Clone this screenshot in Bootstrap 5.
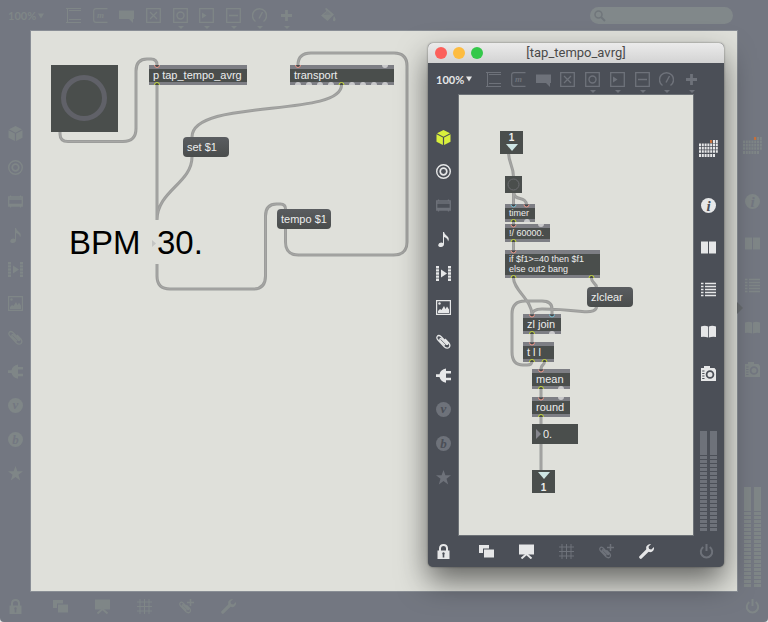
<!DOCTYPE html>
<html lang="en">
<head>
<meta charset="utf-8">
<meta name="viewport" content="width=device-width, initial-scale=1">
<title>tap_tempo</title>
<link href="https://cdn.jsdelivr.net/npm/bootstrap@5.3.0/dist/css/bootstrap.min.css" rel="stylesheet">
<style>
:root{--canvas:#dfe0da;--obj:#4a4e4c;--edge:#7d7e84}
body{font-family:"Liberation Sans",Arial,sans-serif;background:#e9e9e9}
.patcher{--bar:#737781;--ico:#7f8687;--on:#7f8687;--accent:#7f8687;background:var(--bar)}
.patcher.floating{--bar:#4b4f57;--ico:#6e727a;--on:#e6e7e8;--accent:#d9f03c}
.main-window{min-height:100vh;border-radius:0 0 4px 4px}
.floating{left:428px;top:43px;width:296px;height:524px;border-radius:5px;box-shadow:0 14px 30px rgba(0,0,0,.55),0 0 2px rgba(0,0,0,.5)}
.titlebar{height:20px;background:linear-gradient(#ebebeb,#d3d3d3);border-radius:5px 5px 0 0;font:13px/20px Roboto,sans-serif;color:#4a4a4a}
.lights{left:7px;top:4px;gap:6px}
.lights button{width:12px;height:12px;border-radius:50%}
.l-close{background:#fc605b}.l-min{background:#fdbc40}.l-zoom{background:#34c84a}
.toolbar,.statusbar{height:31px}
.floating .toolbar,.floating .statusbar{height:32px}
.ib{border:0;padding:0;background:none;color:var(--ico);width:15px;height:15px;display:block;flex:none;position:relative;line-height:0}
.ib svg{width:15px;height:15px;display:block;overflow:visible}
.ib.lit{color:var(--on)}
.ib.hot{color:var(--accent)}
.ib.menu::after{content:"";position:absolute;left:5px;top:18px;border:3px solid transparent;border-top-color:var(--ico);border-bottom:0}
.zoomer{padding-left:8px;width:66px;color:var(--on)}
.floating .zoomer{width:58px}
.zoomer select{appearance:none;border:0;background:none;padding:0;font:bold 11px/15px Lato,sans-serif;color:inherit;width:30px}
.zoomer svg{width:6px;height:6px}
.tools{width:228px}
.floating .tools{width:213px}
.fill-tool{margin-left:27px}
.finder{width:143px;height:17px;background:#81888a;border-radius:9px;margin-right:35px;padding-left:4px;color:#70767b}
.finder svg{width:12px;height:12px;flex:none}
.finder input{border:0;background:none;min-width:0;font-size:11px;line-height:15px;padding:0 4px;outline:0}
.side{width:31px;flex:none}
.side.left{padding-top:95px;gap:19px}
.floating .side.left{padding-top:35px}
.side.right{padding-top:106px}
.floating .side.right{padding-top:45px}
.calendar{width:19px;height:18px;margin-bottom:39px;color:var(--ico)}
.floating .calendar{margin-bottom:40px;color:var(--on)}
.calendar svg{width:19px;height:18px}
.stack{gap:27px}
.meters{gap:3px;margin-top:auto;margin-bottom:4px}
.meters div{width:7px;height:100px;background:linear-gradient(var(--ico),var(--ico)) 0 0/7px 23px no-repeat,repeating-linear-gradient(to top,var(--ico) 0 3px,transparent 3px 4px)}
.notch{left:0;top:271px;border:6px solid transparent;border-left-color:#666a6e;border-right:0}
.statusbar .first{width:31px}
.statusbar .group{margin-left:22px;gap:27px}
.floating .statusbar .group{margin-left:20px;gap:25px}
.power{width:31px}
.sheet{background:var(--canvas);box-shadow:0 0 0 1px rgba(190,195,195,.3)}
.floating .sheet{overflow:hidden}
.sheet>svg{left:0;top:0;overflow:visible;pointer-events:none}
.cords{fill:none;stroke:#9c9d9b;stroke-width:3}
.cords .core{stroke:#a7a7a5;stroke-width:1}
.obj,.msg,.box{position:absolute;color:#eceded;font-size:11px;line-height:13px;white-space:nowrap}
.obj{background:var(--obj);border:solid var(--edge);border-width:4px 0 3px;padding-left:4px;height:20px}
.obj.tiny{font-size:9px;line-height:11px;height:18px}
.msg{background:linear-gradient(#5a5d60,#4a4d4c);border:0;border-radius:4px;height:20px;padding:0 0 0 4px;line-height:20px;text-align:left}
.box{background:var(--obj);border:0;padding:0}
.box svg{display:block}
.big{position:absolute;color:#000;font-size:33px;line-height:38px}
#o-bang{left:20px;top:34px;width:67px;height:67px}
#o-tap{left:118px;top:34px;width:98px}
#o-transport{left:259px;top:34px;width:104px}
#m-set{left:152px;top:106px;width:46px}
#m-tempo{left:246px;top:178px;width:54px}
#t-bpm{left:38px;top:193px}
#t-num{left:126px;top:193px;width:60px;border:0;background:none;padding:0}
#i-in{left:41px;top:36px;width:23px;height:23px}
#i-bang{left:46px;top:81px;width:17px;height:17px}
#i-timer{left:46px;top:109px;width:30px}
#i-div{left:46px;top:129px;width:45px}
#i-if{left:46px;top:155px;width:95px;height:28px;line-height:10px}
#i-clear{left:128px;top:192px;width:46px}
#i-join{left:64px;top:219px;width:38px}
#i-tll{left:64px;top:247px;width:31px}
#i-mean{left:73px;top:274px;width:38px}
#i-round{left:73px;top:302px;width:38px}
#i-flo{left:73px;top:329px;width:46px;height:20px;line-height:20px;color:#eceded}
#i-flo input{border:0;background:none;color:inherit;width:34px;padding:0;font-size:11px;line-height:20px;height:20px;margin-left:2px}
#i-out{left:73px;top:375px;width:23px;height:23px}
.io{font-weight:bold;font-size:10px;line-height:10px;padding-top:2px}
</style>
<script src="https://cdn.jsdelivr.net/npm/bootstrap@5.3.0/dist/js/bootstrap.bundle.min.js"></script>
</head>
<body>
<svg class="position-absolute" width="0" height="0" aria-hidden="true">
<defs>
<symbol id="panel" viewBox="0 0 15 15"><path d="M0 .5h15M0 14.5h15M1.5 0v15M3 2.5h12M3 11.500h12" fill="none" stroke="currentColor"/></symbol>
<symbol id="mbox" viewBox="0 0 15 15"><path d="M14.500.7H3Q.7.700.7 3v9q0 2.300 2.300 2.300h11.500" fill="none" stroke="currentColor" stroke-width="1.200"/><text x="4" y="10" font-family="Liberation Serif,serif" font-size="9" font-style="italic" font-weight="bold" fill="currentColor">m</text></symbol>
<symbol id="comment" viewBox="0 0 15 15"><path d="M0 2.500h15v8.500h-1v4l-4-4H0z" fill="currentColor"/></symbol>
<symbol id="toggle" viewBox="0 0 15 15"><path d="M.7.700h13.600v13.600H.7zM4 4l7 7M11 4l-7 7" fill="none" stroke="currentColor" stroke-width="1.300"/></symbol>
<symbol id="btn-o" viewBox="0 0 15 15"><path d="M.7.700h13.600v13.600H.7z" fill="none" stroke="currentColor" stroke-width="1.300"/><circle cx="7.500" cy="7.500" r="3.500" fill="none" stroke="currentColor" stroke-width="1.400"/></symbol>
<symbol id="num" viewBox="0 0 15 15"><path d="M.7.700h13.600v13.600H.7z" fill="none" stroke="currentColor" stroke-width="1.300"/><path d="M3 4.500l4.500 3L3 10.500z" fill="currentColor"/></symbol>
<symbol id="slider" viewBox="0 0 15 15"><path d="M.7.700h13.600v13.600H.7zM3 7.500h9" fill="none" stroke="currentColor" stroke-width="1.300"/></symbol>
<symbol id="dial" viewBox="0 0 15 15"><path d="M3.500 13.500A7 7 0 1 1 11.500 13.500M7 10.500L10.500 4" fill="none" stroke="currentColor" stroke-width="1.500"/></symbol>
<symbol id="plus" viewBox="0 0 15 15"><path d="M7.500 2v11M2 7.500h11" stroke="currentColor" stroke-width="2.800"/></symbol>
<symbol id="bucket" viewBox="0 0 15 15"><path d="M4 .7L5.500 0 13 6.500 6.500 13 0 7.500 5.500 3zM13 8q2.500 3.500 1 5-1.500.8-2-.5-.2-1.500 1-4.500z" fill="currentColor"/><path d="M2.500 7l4-4L10 6.500z" fill="var(--bar)" opacity=".5"/></symbol>
<symbol id="cube" viewBox="0 0 15 15"><path d="M7.500 0l6.500 3.300-6.500 3.400L1 3.300zM.5 4.300l6.400 3.300V15L.5 11.700zM14.500 4.300L8.100 7.600V15l6.400-3.300z" fill="currentColor"/></symbol>
<symbol id="target" viewBox="0 0 15 15"><g fill="none" stroke="currentColor" stroke-width="1.400"><circle cx="7.500" cy="7.500" r="6.800"/><circle cx="7.500" cy="7.500" r="3.300" stroke-width="1.700"/></g></symbol>
<symbol id="module" viewBox="0 0 15 15"><path d="M.7 3h13.600v9H.7zM1 5h13M1 10.500h13M2.500 1.500v2M12.500 1.500v2M2.500 11.500v2M12.500 11.500v2" fill="none" stroke="currentColor" stroke-width="1.300"/></symbol>
<symbol id="note" viewBox="0 0 15 15"><path d="M7 0h1q.5 2.500 3 4 3 2.500 1 5.500Q12 6 8 5v7q0 2.500-3 3-2.800 0-2.800-2 .3-2.200 3-2.500 1 0 1.800.4z" fill="currentColor"/></symbol>
<symbol id="film" viewBox="0 0 15 15"><path d="M1.500 0v15M13.500 0v15" stroke="currentColor" stroke-width="3" stroke-dasharray="2.400 .75"/><path d="M5 3.500l6 4-6 4z" fill="currentColor"/></symbol>
<symbol id="picture" viewBox="0 0 15 15"><path d="M.6.600h13.800v13.800H.6z" fill="none" stroke="currentColor" stroke-width="1.200"/><path d="M2 13v-2l2-2 1.500 1L8 6l1.500 3 1.500-2.500 2 3V13z" fill="currentColor"/><circle cx="3.500" cy="3.500" r="1.200" fill="currentColor"/></symbol>
<symbol id="clip" viewBox="0 0 15 15"><path d="M5 4.500l5.500 5.800q1.500.5 1-1L5 2.500Q2.500.5 1.200 2.500.2 4 2 6l6.500 7q2.500 2 4.500.5 1.800-2-.2-4.500L9 5M5 4.500Q3.500 4.500 4 6.300l5 5" fill="none" stroke="currentColor" stroke-width="1.300"/></symbol>
<symbol id="plug" viewBox="0 0 15 15"><path d="M0 6.200h3.500Q4.500 1.500 10 .5v2.500h5v2.500h-5v4.200h5v2.500h-5v2.500Q4.500 13.500 3.500 8.900H0z" fill="currentColor"/></symbol>
<symbol id="vee" viewBox="0 0 15 15"><circle cx="7.500" cy="7.500" r="7.500" fill="currentColor"/><text x="7.500" y="11" text-anchor="middle" font-family="Liberation Serif,serif" font-size="13" font-style="italic" font-weight="bold" fill="var(--bar)">v</text></symbol>
<symbol id="bee" viewBox="0 0 15 15"><circle cx="7.500" cy="7.500" r="7.500" fill="currentColor"/><text x="7.500" y="12" text-anchor="middle" font-family="Liberation Serif,serif" font-size="13" font-style="italic" font-weight="bold" fill="var(--bar)">b</text></symbol>
<symbol id="star" viewBox="0 0 15 15"><path d="M7.500 0l1.900 5.300H15l-4.500 3.500 1.700 5.600-4.700-3.400-4.700 3.400 1.700-5.600L0 5.300h5.600z" fill="currentColor"/></symbol>
<symbol id="cells" viewBox="0 0 19 18"><path d="M14 1.500h5" stroke="currentColor" stroke-width="3" stroke-dasharray="2 .8"/><path d="M0 4.700h19M0 8.100h19M0 11.500h19" stroke="currentColor" stroke-width="2.600" stroke-dasharray="2 .8"/><path d="M0 15.500h16" stroke="currentColor" stroke-width="3" stroke-dasharray="2 .8"/><path d="M11 0h2.200v3H11z" fill="#c8703a"/></symbol>
<symbol id="info" viewBox="0 0 15 15"><circle cx="7.500" cy="7.500" r="7.500" fill="currentColor"/><text x="7.500" y="12.500" text-anchor="middle" font-family="Liberation Serif,serif" font-size="15" font-style="italic" font-weight="bold" fill="var(--bar)">i</text></symbol>
<symbol id="panes" viewBox="0 0 15 15"><path d="M0 1.500h7v12H0zM8 1.500h7v12H8z" fill="currentColor"/></symbol>
<symbol id="list" viewBox="0 0 15 15"><path d="M0 1.500h2.500M4 1.500h11M0 4.500h2.500M4 4.500h11M0 7.500h2.500M4 7.500h11M0 10.500h2.500M4 10.500h11M0 13.500h2.500M4 13.500h11" stroke="currentColor" stroke-width="1.500"/></symbol>
<symbol id="book" viewBox="0 0 15 15"><path d="M0 2.500Q4 1 7.100 2.500v11Q4 12.500 0 13zM7.900 2.500Q11 1 15 2.500V13q-4-.5-7.100.500z" fill="currentColor"/></symbol>
<symbol id="camera" viewBox="0 0 15 15"><path d="M0 2h3V0h6v2h4.500l1.500 2v11H0z" fill="currentColor"/><circle cx="9" cy="8.500" r="3.400" fill="none" stroke="var(--bar)" stroke-width="1.800"/><path d="M1.200 5h2.300M1.200 7.500h2.300M1.200 10h2.300M1.200 12.500h2.300" stroke="var(--bar)"/></symbol>
<symbol id="power" viewBox="0 0 15 15"><path d="M4.300 3a5.700 5.700 0 1 0 6.400 0M7.500 0v7" fill="none" stroke="currentColor" stroke-width="2"/></symbol>
<symbol id="lock" viewBox="0 0 15 15"><path d="M4 7V4q.3-3 3.500-3T11 4v3" fill="none" stroke="currentColor" stroke-width="2"/><path d="M1.500 6.500h12V15h-12z" fill="currentColor"/><path d="M7.500 8.300a1.300 1.300 0 0 1 .8 2.300V13.500H6.700v-2.900a1.300 1.300 0 0 1 .8-2.300z" fill="var(--bar)"/></symbol>
<symbol id="wins" viewBox="0 0 15 15"><path d="M0 1h10v3.500H4V9H0zM5 5.500h10.500V13.500H5z" fill="currentColor"/></symbol>
<symbol id="easel" viewBox="0 0 15 15"><path d="M0 .5h15v10H0z" fill="currentColor"/><path d="M2.500 14.500l5-4.500 5 4.500" fill="none" stroke="currentColor" stroke-width="2"/></symbol>
<symbol id="hash" viewBox="0 0 15 15"><path d="M3 0v15M7.500 0v15M12 0v15M0 3h15M0 7.500h15M0 12h15" stroke="currentColor" stroke-width="1"/></symbol>
<symbol id="clipadd" viewBox="0 0 15 15"><g transform="translate(0 2) scale(.83)"><path d="M5 4.500l5.500 5.800q1.500.5 1-1L5 2.500Q2.500.5 1.200 2.500.2 4 2 6l6.500 7q2.500 2 4.500.5 1.800-2-.2-4.500L9 5M5 4.500Q3.500 4.500 4 6.300l5 5" fill="none" stroke="currentColor" stroke-width="1.500"/></g><path d="M11.500 0v7M8 3.500h7" stroke="currentColor" stroke-width="1.500"/></symbol>
<symbol id="wrench" viewBox="0 0 15 15"><path d="M1.800 13.200L9 6" stroke="currentColor" stroke-width="3.200" stroke-linecap="round"/><path d="M12 0L9.500 2.800l.5 2.300 2.300.4L15 3q.5 3.500-2 4.800-2.500 1-4.800-.8Q6.500 4.500 7.500 2.300 9-.2 12 0z" fill="currentColor"/></symbol>
<symbol id="down" viewBox="0 0 6 6"><path d="M0 .5h6l-3 5z" fill="currentColor"/></symbol>
</defs>
</svg>

<main class="patcher main-window d-flex flex-column position-relative">
  <header class="toolbar d-flex align-items-center">
    <div class="zoomer d-flex align-items-center"><select aria-label="Zoom"><option>100%</option></select><svg aria-hidden="true"><use href="#down"/></svg></div>
    <div class="tools d-flex justify-content-between">
      <button class="ib" aria-label="Object"><svg><use href="#panel"/></svg></button>
      <button class="ib" aria-label="Message"><svg><use href="#mbox"/></svg></button>
      <button class="ib" aria-label="Comment"><svg><use href="#comment"/></svg></button>
      <button class="ib" aria-label="Toggle"><svg><use href="#toggle"/></svg></button>
      <button class="ib menu" aria-label="Button"><svg><use href="#btn-o"/></svg></button>
      <button class="ib menu" aria-label="Number"><svg><use href="#num"/></svg></button>
      <button class="ib menu" aria-label="Slider"><svg><use href="#slider"/></svg></button>
      <button class="ib menu" aria-label="Dial"><svg><use href="#dial"/></svg></button>
      <button class="ib menu" aria-label="Add"><svg><use href="#plus"/></svg></button>
    </div>
    <button class="ib fill-tool" aria-label="Format"><svg><use href="#bucket"/></svg></button>
    <label class="finder d-flex align-items-center ms-auto"><svg viewBox="0 0 12 12" aria-hidden="true"><circle cx="4.500" cy="4.500" r="3.500" fill="none" stroke="currentColor" stroke-width="1.500"/><path d="M7 7l4 4" stroke="currentColor" stroke-width="2"/></svg><input type="search" class="flex-grow-1" aria-label="Search"></label>
  </header>
  <div class="d-flex flex-grow-1">
    <nav class="side left d-flex flex-column align-items-center" aria-label="Browser">
      <button class="ib" aria-label="Objects"><svg><use href="#cube"/></svg></button>
      <button class="ib" aria-label="Targets"><svg><use href="#target"/></svg></button>
      <button class="ib" aria-label="Modules"><svg><use href="#module"/></svg></button>
      <button class="ib" aria-label="Audio"><svg><use href="#note"/></svg></button>
      <button class="ib" aria-label="Video"><svg><use href="#film"/></svg></button>
      <button class="ib" aria-label="Images"><svg><use href="#picture"/></svg></button>
      <button class="ib" aria-label="Snippets"><svg><use href="#clip"/></svg></button>
      <button class="ib" aria-label="Plug-ins"><svg><use href="#plug"/></svg></button>
      <button class="ib" aria-label="Vizzie"><svg><use href="#vee"/></svg></button>
      <button class="ib" aria-label="Beap"><svg><use href="#bee"/></svg></button>
      <button class="ib" aria-label="Favorites"><svg><use href="#star"/></svg></button>
    </nav>
    <section class="sheet flex-grow-1 position-relative">
      <svg class="cords position-absolute" width="706" height="560" viewBox="31 31 706 560" aria-hidden="true">
        <g id="c1"><path d="M60 131v3q0 7.500 8 7.500h55q13 0 13-13V71q0-12 11-12h4q6 0 6 6M157 85v135M341.500 85C341.500 118 192 98 192 137M192 157C192 183 157 191 157 220M157 264v12q0 13 13 13h83q12.500 0 12.500-13v-60q0-12 11-12h4q5 0 5 5M285.500 229v13q0 13 13 13h95q13.500 0 13.500-13V66q0-13-13-13h-83q-13 0-13 12"/></g>
        <use href="#c1" class="core"/>
      </svg>
      <button class="box" id="o-bang" aria-label="Bang"><svg width="67" height="67"><circle cx="33" cy="33" r="20.500" fill="none" stroke="#606168" stroke-width="5"/></svg></button>
      <div class="obj" id="o-tap">p tap_tempo_avrg</div>
      <div class="obj" id="o-transport">transport</div>
      <button class="msg" id="m-set">set $1</button>
      <button class="msg" id="m-tempo">tempo $1</button>
      <label class="big" id="t-bpm" for="t-num">BPM</label>
      <input class="big" id="t-num" value="30.">
      <svg class="position-absolute" width="706" height="560" viewBox="31 31 706 560" aria-hidden="true">
        <path d="M152 240l4 3.500-4 3.500z" fill="#c4c5c3"/>
        <g fill="#c8c8ca"><path d="M382 65a3 3 0 0 0 6 0zM295 85a3 3 0 0 1 6 0zM306 85a3 3 0 0 1 6 0zM317 85a3 3 0 0 1 6 0zM328 85a3 3 0 0 1 6 0zM349 85a3 3 0 0 1 6 0zM360 85a3 3 0 0 1 6 0zM371 85a3 3 0 0 1 6 0zM382 85a3 3 0 0 1 6 0z"/></g>
        <g fill="#44484a" stroke="#f09a8c"><path d="M154.500 65a2.500 2.500 0 0 0 5 0M295.500 65a2.500 2.500 0 0 0 5 0"/></g>
        <g fill="#44484a" stroke="#c9dc3a"><path d="M154.500 85a2.500 2.500 0 0 1 5 0M339 85a2.500 2.500 0 0 1 5 0"/></g>
      </svg>
    </section>
    <aside class="side right d-flex flex-column align-items-center position-relative">
      <span class="notch position-absolute"></span>
      <button class="ib calendar" aria-label="Clippings"><svg><use href="#cells"/></svg></button>
      <div class="stack d-flex flex-column">
        <button class="ib" aria-label="Inspector"><svg><use href="#info"/></svg></button>
        <button class="ib" aria-label="Reference"><svg><use href="#panes"/></svg></button>
        <button class="ib" aria-label="Console"><svg><use href="#list"/></svg></button>
        <button class="ib" aria-label="Lessons"><svg><use href="#book"/></svg></button>
        <button class="ib" aria-label="Snapshots"><svg><use href="#camera"/></svg></button>
      </div>
      <div class="meters d-flex"><div></div><div></div></div>
    </aside>
  </div>
  <footer class="statusbar d-flex align-items-center">
    <div class="first d-flex justify-content-center"><button class="ib" aria-label="Lock"><svg><use href="#lock"/></svg></button></div>
    <div class="group d-flex">
      <button class="ib" aria-label="New view"><svg><use href="#wins"/></svg></button>
      <button class="ib" aria-label="Presentation"><svg><use href="#easel"/></svg></button>
      <button class="ib" aria-label="Grid"><svg><use href="#hash"/></svg></button>
      <button class="ib" aria-label="Add snippet"><svg><use href="#clipadd"/></svg></button>
      <button class="ib" aria-label="Debug"><svg><use href="#wrench"/></svg></button>
    </div>
    <div class="power d-flex justify-content-center ms-auto"><button class="ib" aria-label="Audio on"><svg><use href="#power"/></svg></button></div>
  </footer>

  <section class="patcher floating position-absolute d-flex flex-column">
    <div class="titlebar position-relative text-center flex-shrink-0">
      <div class="lights position-absolute d-flex">
        <button class="l-close border-0 p-0" aria-label="Close"></button><button class="l-min border-0 p-0" aria-label="Minimize"></button><button class="l-zoom border-0 p-0" aria-label="Full size"></button>
      </div>[tap_tempo_avrg]</div>
    <div class="toolbar d-flex align-items-center flex-shrink-0">
      <div class="zoomer d-flex align-items-center"><select aria-label="Zoom"><option>100%</option></select><svg aria-hidden="true"><use href="#down"/></svg></div>
      <div class="tools d-flex justify-content-between">
        <button class="ib" aria-label="Object"><svg><use href="#panel"/></svg></button>
        <button class="ib" aria-label="Message"><svg><use href="#mbox"/></svg></button>
        <button class="ib" aria-label="Comment"><svg><use href="#comment"/></svg></button>
        <button class="ib" aria-label="Toggle"><svg><use href="#toggle"/></svg></button>
        <button class="ib menu" aria-label="Button"><svg><use href="#btn-o"/></svg></button>
        <button class="ib menu" aria-label="Number"><svg><use href="#num"/></svg></button>
        <button class="ib menu" aria-label="Slider"><svg><use href="#slider"/></svg></button>
        <button class="ib menu" aria-label="Dial"><svg><use href="#dial"/></svg></button>
        <button class="ib menu" aria-label="Add"><svg><use href="#plus"/></svg></button>
      </div>
    </div>
    <div class="d-flex flex-grow-1">
      <nav class="side left d-flex flex-column align-items-center" aria-label="Browser">
        <button class="ib hot" aria-label="Objects"><svg><use href="#cube"/></svg></button>
        <button class="ib lit" aria-label="Targets"><svg><use href="#target"/></svg></button>
        <button class="ib" aria-label="Modules"><svg><use href="#module"/></svg></button>
        <button class="ib lit" aria-label="Audio"><svg><use href="#note"/></svg></button>
        <button class="ib lit" aria-label="Video"><svg><use href="#film"/></svg></button>
        <button class="ib lit" aria-label="Images"><svg><use href="#picture"/></svg></button>
        <button class="ib lit" aria-label="Snippets"><svg><use href="#clip"/></svg></button>
        <button class="ib lit" aria-label="Plug-ins"><svg><use href="#plug"/></svg></button>
        <button class="ib" aria-label="Vizzie"><svg><use href="#vee"/></svg></button>
        <button class="ib" aria-label="Beap"><svg><use href="#bee"/></svg></button>
        <button class="ib" aria-label="Favorites"><svg><use href="#star"/></svg></button>
      </nav>
      <div class="sheet flex-grow-1 position-relative">
        <svg class="cords position-absolute" width="234" height="440" viewBox="459 95 234 440" aria-hidden="true">
          <g id="c2"><path d="M508.500 153C509 164 513.500 166 513.500 177M513.500 193v12M514 193C514 201 526.500 196 526.500 205M513.500 221v4M513.500 241v10M513.500 278C513.500 290 532 300 532 315M591.500 278C591.500 284 596.500 282 596.500 288M596.500 306Q597 313 582 311.500C568 310 550 309 542 309Q532 309 532 315M552 315v-6q0-8-10-8h-17q-13 0-13 13v38q0 13 11 13h4q5 0 5-4M532 333v10M544.500 361C544.500 367 541 363 541 370M541 389v8M541 416v9M541 443v28"/></g>
          <use href="#c2" class="core"/>
        </svg>
        <div class="box io text-center" id="i-in">1<svg class="mx-auto" width="12" height="8"><path d="M0 1h12l-6 7z" fill="#cfe6e5"/></svg></div>
        <button class="box" id="i-bang" aria-label="Bang"><svg width="17" height="17"><circle cx="8.500" cy="8.500" r="5.500" fill="none" stroke="#6b6c70"/></svg></button>
        <div class="obj tiny" id="i-timer">timer</div>
        <div class="obj tiny" id="i-div">!/ 60000.</div>
        <div class="obj tiny" id="i-if">if $f1&gt;=40 then $f1<br>else out2 bang</div>
        <button class="msg" id="i-clear">zlclear</button>
        <div class="obj" id="i-join">zl join</div>
        <div class="obj" id="i-tll">t l l</div>
        <div class="obj" id="i-mean">mean</div>
        <div class="obj" id="i-round">round</div>
        <label class="box d-flex align-items-center ps-1" id="i-flo"><svg width="5" height="10" aria-hidden="true"><path d="M0 0l5 5-5 5z" fill="#85868c"/></svg><input value="0." aria-label="Average"></label>
        <div class="box io text-center" id="i-out"><svg class="mx-auto mb-1" width="12" height="7"><path d="M0 0h12l-6 7z" fill="#cfe6e5"/></svg>1</div>
        <svg class="position-absolute" width="234" height="440" viewBox="459 95 234 440" aria-hidden="true">
          <g fill="#c8c8ca"><path d="M524 222a3 3 0 0 1 6 0zM538 224a3 3 0 0 0 6 0zM549 334a3 3 0 0 1 6 0zM558 389a3 3 0 0 1 6 0zM558 397a3 3 0 0 0 6 0z"/></g>
          <g fill="#44484a" stroke="#f09a8c"><path d="M524 204.500a2.500 2.500 0 0 0 5 0M511 224.500a2.500 2.500 0 0 0 5 0M511 250.500a2.500 2.500 0 0 0 5 0M529.500 314.500a2.500 2.500 0 0 0 5 0M529.500 342.500a2.500 2.500 0 0 0 5 0M538.500 369.500a2.500 2.500 0 0 0 5 0M538.500 397.500a2.500 2.500 0 0 0 5 0"/></g>
          <g fill="#44484a" stroke="#7cc4d8"><path d="M511 204.500a2.500 2.500 0 0 0 5 0M549.500 314.500a2.500 2.500 0 0 0 5 0"/></g>
          <g fill="#44484a" stroke="#c9dc3a"><path d="M511 222a2.500 2.500 0 0 1 5 0M511 242a2.500 2.500 0 0 1 5 0M511 278a2.500 2.500 0 0 1 5 0M589 278a2.500 2.500 0 0 1 5 0M529.500 334a2.500 2.500 0 0 1 5 0M529.500 362a2.500 2.500 0 0 1 5 0M542 362a2.500 2.500 0 0 1 5 0M538.500 389a2.500 2.500 0 0 1 5 0M538.500 417a2.500 2.500 0 0 1 5 0"/></g>
        </svg>
      </div>
      <aside class="side right d-flex flex-column align-items-center">
        <button class="ib calendar" aria-label="Clippings"><svg><use href="#cells"/></svg></button>
        <div class="stack d-flex flex-column">
          <button class="ib lit" aria-label="Inspector"><svg><use href="#info"/></svg></button>
          <button class="ib lit" aria-label="Reference"><svg><use href="#panes"/></svg></button>
          <button class="ib lit" aria-label="Console"><svg><use href="#list"/></svg></button>
          <button class="ib lit" aria-label="Lessons"><svg><use href="#book"/></svg></button>
          <button class="ib lit" aria-label="Snapshots"><svg><use href="#camera"/></svg></button>
        </div>
        <div class="meters d-flex"><div></div><div></div></div>
      </aside>
    </div>
    <div class="statusbar d-flex align-items-center flex-shrink-0">
      <div class="first d-flex justify-content-center"><button class="ib lit" aria-label="Lock"><svg><use href="#lock"/></svg></button></div>
      <div class="group d-flex">
        <button class="ib lit" aria-label="New view"><svg><use href="#wins"/></svg></button>
        <button class="ib lit" aria-label="Presentation"><svg><use href="#easel"/></svg></button>
        <button class="ib" aria-label="Grid"><svg><use href="#hash"/></svg></button>
        <button class="ib" aria-label="Add snippet"><svg><use href="#clipadd"/></svg></button>
        <button class="ib lit" aria-label="Debug"><svg><use href="#wrench"/></svg></button>
      </div>
      <div class="power d-flex justify-content-center ms-auto pe-1"><button class="ib" aria-label="Audio on"><svg><use href="#power"/></svg></button></div>
    </div>
  </section>
</main>
</body>
</html>
